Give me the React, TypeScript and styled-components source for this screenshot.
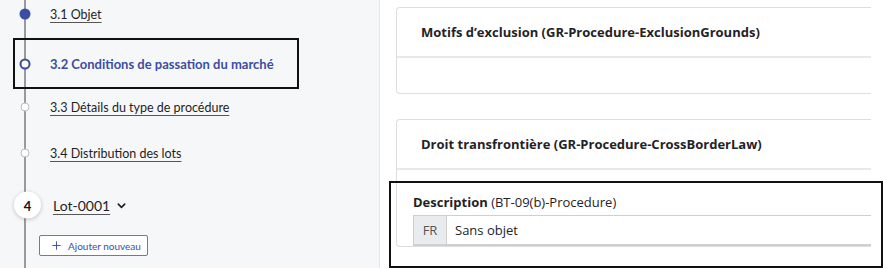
import React from "react";
import styled, { createGlobalStyle } from "styled-components";

const Global = createGlobalStyle`
  html, body { margin: 0; padding: 0; background: #fff; }
  body { width: 883px; height: 268px; overflow: hidden; }
  * { box-sizing: border-box; }
`;

const Page = styled.div`
  display: flex;
  width: 883px;
  height: 268px;
  overflow: hidden;
`;

const Sidebar = styled.aside`
  position: relative;
  width: 380px;
  flex: none;
  background: #f6f7f9;
  border-right: 1px solid #e6e7ea;
  font-family: "Lato", "Noto Sans", sans-serif;
  padding-top: 2px;
`;

const TimelineLine = styled.div`
  position: absolute;
  left: 24px;
  top: 0;
  bottom: 0;
  width: 2px;
  background: #9a9a9a;
`;

const Steps = styled.div`
  position: relative;
  display: flex;
  flex-direction: column;
`;

const Step = styled.div<{ $h: number }>`
  position: relative;
  display: flex;
  align-items: center;
  height: ${(p) => p.$h}px;
  padding-left: 50px;
`;

const Dot = styled.span<{ $kind: "done" | "current" | "todo" }>`
  position: absolute;
  left: 25px;
  top: 50%;
  transform: translate(-50%, -50%);
  border-radius: 50%;
  ${(p) =>
    p.$kind === "done"
      ? `width: 11px; height: 11px; background: #3b4ea3;`
      : p.$kind === "current"
      ? `width: 11px; height: 11px; background: #fff; border: 2px solid #3b4ea3;`
      : `width: 9px; height: 9px; background: #fff; border: 1.5px solid #bdbdbd;`}
`;

const StepLink = styled.span<{ $active?: boolean }>`
  font-size: ${(p) => (p.$active ? "13px" : "12.5px")};
  color: ${(p) => (p.$active ? "#3b4ea3" : "#1e1e1e")};
  font-weight: ${(p) => (p.$active ? 700 : 400)};
  text-decoration: ${(p) => (p.$active ? "none" : "underline")};
  text-underline-offset: 3px;
  text-decoration-color: #555;
`;

const Highlight = styled.div`
  position: absolute;
  inset: 0 0 0 13px;
  width: 286px;
  border: 2px solid #111;
  pointer-events: none;
`;

const LotRow = styled.div`
  position: relative;
  display: flex;
  align-items: center;
  gap: 6px;
  height: 50px;
  padding-left: 53px;
  margin-top: -1px;
`;

const Badge = styled.span`
  position: absolute;
  left: 14px;
  top: 50%;
  transform: translateY(-50%);
  width: 27px;
  height: 27px;
  border-radius: 50%;
  background: #fff;
  box-shadow: 0 1px 4px rgba(0, 0, 0, 0.22);
  display: flex;
  align-items: center;
  justify-content: center;
  font-weight: 700;
  font-size: 13px;
  color: #111;
`;

const LotLink = styled.span`
  font-size: 14px;
  color: #1e1e1e;
  text-decoration: underline;
  text-underline-offset: 3px;
  text-decoration-color: #555;
`;

const ButtonRow = styled.div`
  position: relative;
  padding: 4px 0 0 39px;
`;

const AddButton = styled.button`
  display: inline-flex;
  align-items: center;
  gap: 7px;
  height: 21px;
  padding: 0 6px 0 12px;
  background: #fff;
  border: 1px solid #6a77b8;
  border-radius: 2px;
  color: #3b4ea3;
  font-family: "Lato", "Noto Sans", sans-serif;
  font-size: 10px;
  white-space: nowrap;
  svg { flex: none; }
`;

const Main = styled.main`
  flex: 1;
  background: #fff;
  padding: 7px 12px 0 16px;
  display: flex;
  flex-direction: column;
  gap: 25px;
  font-family: "Open Sans", "Noto Sans", sans-serif;
  color: #212529;
`;

const Card = styled.section`
  position: relative;
  border: 1px solid #dedede;
  border-right: 0;
  border-radius: 4px 0 0 4px;
  background: #fff;
`;

const CardHeader = styled.div`
  height: 50px;
  display: flex;
  align-items: center;
  padding-left: 24px;
  font-size: 13px;
  font-weight: 700;
  color: #1f2328;
  border-bottom: 2px solid #e8e8e8;
`;

const CardBody = styled.div<{ $h: number }>`
  height: ${(p) => p.$h}px;
`;

const FieldBox = styled.div`
  position: absolute;
  left: -8px;
  right: -12px;
  top: 61px;
  height: 87px;
  border: 2px solid #111;
  pointer-events: none;
`;

const Field = styled.div`
  padding: 23px 0 0 16px;
`;

const Label = styled.div`
  font-size: 13px;
  color: #1f2328;
  margin-bottom: 4px;
  b { font-weight: 700; }
`;

const InputGroup = styled.div`
  display: flex;
  height: 31px;
  border-top: 1px solid #cfcfcf;
  border-bottom: 2px solid #cfcfcf;
`;

const Addon = styled.span`
  width: 34px;
  display: flex;
  align-items: center;
  justify-content: center;
  background: #e9ecef;
  border-left: 1px solid #cfcfcf;
  border-right: 1px solid #cfcfcf;
  font-size: 13px;
  color: #555;
`;

const Input = styled.div`
  flex: 1;
  display: flex;
  align-items: center;
  padding-left: 8px;
  font-size: 13px;
  color: #212529;
`;

export default function App() {
  return (
    <>
      <Global />
      <Page>
        <Sidebar>
          <TimelineLine />
          <Steps>
            <Step $h={24}>
              <Dot $kind="done" />
              <StepLink>3.1 Objet</StepLink>
            </Step>
            <Step $h={12} />
            <Step $h={51}>
              <Highlight />
              <Dot $kind="current" />
              <StepLink $active>3.2 Conditions de passation du marché</StepLink>
            </Step>
            <Step $h={36}>
              <Dot $kind="todo" />
              <StepLink>3.3 Détails du type de procédure</StepLink>
            </Step>
            <Step $h={56}>
              <Dot $kind="todo" />
              <StepLink>3.4 Distribution des lots</StepLink>
            </Step>
          </Steps>
          <LotRow>
            <Badge>4</Badge>
            <LotLink>Lot-0001</LotLink>
            <svg width="11" height="11" viewBox="0 0 24 24" fill="none" stroke="#1e1e1e" strokeWidth="3.5" strokeLinecap="round" strokeLinejoin="round">
              <path d="M5 9l7 7 7-7" />
            </svg>
          </LotRow>
          <ButtonRow>
            <AddButton>
              <svg width="9" height="9" viewBox="0 0 24 24" fill="none" stroke="#3b4ea3" strokeWidth="2.6" strokeLinecap="round">
                <path d="M12 2v20M2 12h20" />
              </svg>
              Ajouter nouveau
            </AddButton>
          </ButtonRow>
        </Sidebar>
        <Main>
          <Card>
            <CardHeader>Motifs d’exclusion (GR-Procedure-ExclusionGrounds)</CardHeader>
            <CardBody $h={35} />
          </Card>
          <Card>
            <CardHeader>Droit transfrontière (GR-Procedure-CrossBorderLaw)</CardHeader>
            <FieldBox />
            <Field>
              <Label>
                <b>Description</b> (BT-09(b)-Procedure)
              </Label>
              <InputGroup>
                <Addon>FR</Addon>
                <Input>Sans objet</Input>
              </InputGroup>
            </Field>
          </Card>
        </Main>
      </Page>
    </>
  );
}
